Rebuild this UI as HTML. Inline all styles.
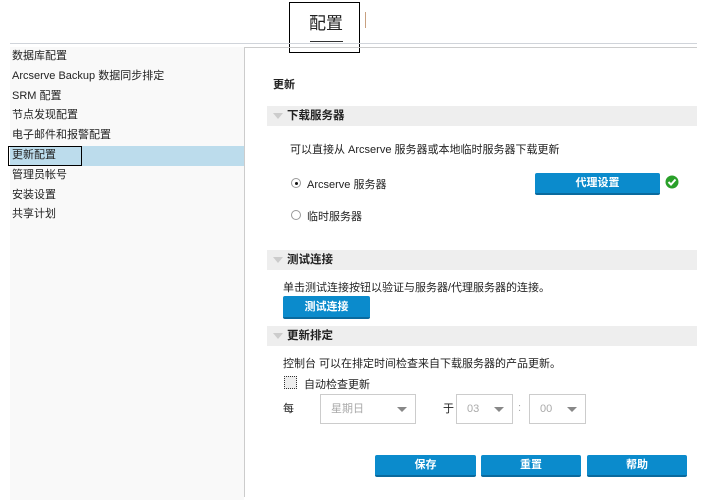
<!DOCTYPE html>
<html><head><meta charset="utf-8"><style>
*{margin:0;padding:0;box-sizing:border-box}
body{width:707px;height:500px;background:#fff;font-family:"Liberation Sans","Noto Sans CJK SC",sans-serif;font-size:11px;color:#222;position:relative;overflow:hidden}
.a{position:absolute;white-space:nowrap}
.side{position:absolute;left:10px;top:47px;width:234px;height:453px;background:#f9f9f9}
.side div{height:19.8px;line-height:19.8px;padding-left:2px}
.sel{background:#bcdcec}
.hdr{position:absolute;left:267px;width:430px;height:20px;background:#eeeeee;font-weight:bold;font-size:11.5px;line-height:20px;padding-left:20px}
.hdr:before{content:"";position:absolute;left:6px;top:7px;border-left:5px solid transparent;border-right:5px solid transparent;border-top:6px solid #ccc}
.btn{position:absolute;background:#0b8bcc;color:#fff;font-weight:bold;text-align:center;border-bottom:2px solid #0a6a9e;border-radius:2px}
.selb{position:absolute;border:1px solid #ccc;color:#aaa;font-size:11px;line-height:28px;padding-left:10px}
.selb:after{content:"";position:absolute;right:8px;top:12px;border-left:5px solid transparent;border-right:5px solid transparent;border-top:5px solid #888}
</style></head><body>
<div class="a" style="left:289px;top:2px;width:71px;height:51px;border:1px solid #000"></div>
<div class="a" style="left:309px;top:9px;font-size:17px;color:#222">配置</div>
<div class="a" style="left:310px;top:41px;width:33px;height:1px;background:#333"></div>
<div class="a" style="left:365px;top:12px;width:1px;height:16px;background:#c8a080"></div>
<div class="a" style="left:10px;top:43px;width:687px;height:1px;background:#d0d4da"></div>
<div class="side">
<div>数据库配置</div><div>Arcserve Backup 数据同步排定</div><div>SRM 配置</div><div>节点发现配置</div><div>电子邮件和报警配置</div><div class="sel" style="position:relative"><span style="position:absolute;left:-2px;top:0;width:74px;height:20px;border:1.5px solid #000"></span>更新配置</div><div>管理员帐号</div><div>安装设置</div><div>共享计划</div>
</div>
<div class="a" style="left:244px;top:47px;width:1px;height:450px;background:#ccc"></div>
<div class="a" style="left:244px;top:47px;width:453px;height:1px;background:#ccc"></div>
<div class="a" style="left:273px;top:76px;font-weight:bold">更新</div>
<div class="hdr" style="top:106px">下载服务器</div>
<div class="a" style="left:290px;top:141px">可以直接从 Arcserve 服务器或本地临时服务器下载更新</div>
<div class="a" style="left:291px;top:178px;width:10px;height:10px;border:1px solid #999;border-radius:50%;background:#fff"><div style="position:absolute;left:2.5px;top:2.5px;width:3px;height:3px;background:#111;border-radius:50%"></div></div>
<div class="a" style="left:307px;top:176px">Arcserve 服务器</div>
<div class="btn" style="left:535px;top:173px;width:125px;height:22px;line-height:21px">代理设置</div>
<svg class="a" style="left:665px;top:175px" width="14" height="14"><circle cx="7" cy="7" r="6.5" fill="#2aa02a"/><path d="M3.5 7l2.5 2.5 4.5-5" stroke="#fff" stroke-width="2" fill="none"/></svg>
<div class="a" style="left:291px;top:210px;width:10px;height:10px;border:1px solid #999;border-radius:50%;background:#fff"></div>
<div class="a" style="left:307px;top:208px">临时服务器</div>
<div class="hdr" style="top:250px">测试连接</div>
<div class="a" style="left:283px;top:279px">单击测试连接按钮以验证与服务器/代理服务器的连接。</div>
<div class="btn" style="left:283px;top:296px;width:87px;height:23px;line-height:22px">测试连接</div>
<div class="hdr" style="top:326px">更新排定</div>
<div class="a" style="left:283px;top:355px">控制台 可以在排定时间检查来自下载服务器的产品更新。</div>
<div class="a" style="left:284px;top:376px;width:13px;height:13px;border:1px dotted #333;background:#eee"></div>
<div class="a" style="left:304px;top:376px">自动检查更新</div>
<div class="a" style="left:283px;top:400px">每</div>
<div class="selb" style="left:320px;top:394px;width:96px;height:30px">星期日</div>
<div class="a" style="left:443px;top:400px">于</div>
<div class="selb" style="left:456px;top:394px;width:57px;height:30px">03</div>
<div class="a" style="left:518px;top:402px;color:#aaa">:</div>
<div class="selb" style="left:529px;top:394px;width:57px;height:30px">00</div>
<div class="btn" style="left:375px;top:455px;width:101px;height:22px;line-height:21px">保存</div>
<div class="btn" style="left:481px;top:455px;width:100px;height:22px;line-height:21px">重置</div>
<div class="btn" style="left:587px;top:455px;width:100px;height:22px;line-height:21px">帮助</div>
</body></html>
